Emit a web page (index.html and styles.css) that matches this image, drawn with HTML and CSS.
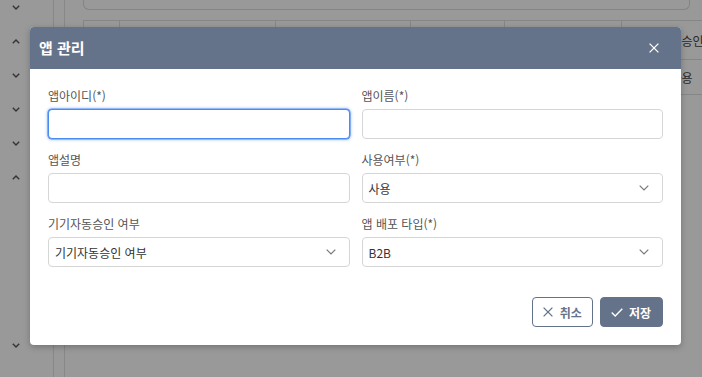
FILE: index.html
```html
<!DOCTYPE html>
<html lang="ko">
<head>
<meta charset="utf-8">
<title>앱 관리</title>
<link rel="stylesheet" href="styles.css">
</head>
<body>
<div class="page">
  <aside class="sidebar">
    <ul class="nav">
      <li class="nav-item"><svg class="chev" viewBox="0 0 8 5"><polyline points="0.8,0.8 4,4 7.2,0.8"/></svg></li>
      <li class="nav-item"><svg class="chev" viewBox="0 0 8 5"><polyline points="0.8,4.2 4,1 7.2,4.2"/></svg></li>
      <li class="nav-item"><svg class="chev" viewBox="0 0 8 5"><polyline points="0.8,0.8 4,4 7.2,0.8"/></svg></li>
      <li class="nav-item"><svg class="chev" viewBox="0 0 8 5"><polyline points="0.8,0.8 4,4 7.2,0.8"/></svg></li>
      <li class="nav-item"><svg class="chev" viewBox="0 0 8 5"><polyline points="0.8,0.8 4,4 7.2,0.8"/></svg></li>
      <li class="nav-item"><svg class="chev" viewBox="0 0 8 5"><polyline points="0.8,4.2 4,1 7.2,4.2"/></svg></li>
      <li class="nav-sub"></li>
      <li class="nav-item"><svg class="chev" viewBox="0 0 8 5"><polyline points="0.8,0.8 4,4 7.2,0.8"/></svg></li>
    </ul>
  </aside>
  <div class="rail"></div>
  <main class="main">
    <div class="filter-box">
      <div class="filter-field"></div>
      <div class="filter-field"></div>
      <div class="filter-field"></div>
    </div>
    <div class="table-wrap">
      <table class="grid">
        <colgroup>
          <col class="c1"><col class="c2"><col class="c3"><col class="c4"><col class="c5"><col class="c6">
        </colgroup>
        <thead>
          <tr><th></th><th>앱아이디</th><th>앱이름</th><th>앱설명</th><th>사용여부</th><th>자동승인</th></tr>
        </thead>
        <tbody>
          <tr><td></td><td></td><td></td><td></td><td></td><td>사용</td></tr>
        </tbody>
      </table>
    </div>
  </main>
</div>

<div class="overlay"></div>

<div class="modal">
  <div class="modal-header">
    <h2 class="modal-title">앱 관리</h2>
    <button class="modal-close" type="button">
      <svg viewBox="0 0 10 10" width="10" height="10"><path d="M0.6 0.6 L9.4 9.4 M9.4 0.6 L0.6 9.4"/></svg>
    </button>
  </div>
  <div class="modal-body">
    <div class="form-grid">
      <div class="field">
        <label class="label">앱아이디(*)</label>
        <input class="input is-focused" type="text">
      </div>
      <div class="field">
        <label class="label">앱이름(*)</label>
        <input class="input" type="text">
      </div>
      <div class="field">
        <label class="label">앱설명</label>
        <input class="input" type="text">
      </div>
      <div class="field">
        <label class="label">사용여부(*)</label>
        <div class="select"><span>사용</span><svg class="select-arrow" viewBox="0 0 10 6"><polyline points="0.7,0.7 5,5 9.3,0.7"/></svg></div>
      </div>
      <div class="field">
        <label class="label">기기자동승인 여부</label>
        <div class="select"><span>기기자동승인 여부</span><svg class="select-arrow" viewBox="0 0 10 6"><polyline points="0.7,0.7 5,5 9.3,0.7"/></svg></div>
      </div>
      <div class="field">
        <label class="label">앱 배포 타입(*)</label>
        <div class="select"><span>B2B</span><svg class="select-arrow" viewBox="0 0 10 6"><polyline points="0.7,0.7 5,5 9.3,0.7"/></svg></div>
      </div>
    </div>
    <div class="modal-footer">
      <button class="btn btn-outline" type="button">
        <svg class="btn-icon" viewBox="0 0 10 10" width="10" height="10"><path d="M0.6 0.6 L9.4 9.4 M9.4 0.6 L0.6 9.4"/></svg>
        <span>취소</span>
      </button>
      <button class="btn btn-primary" type="button">
        <svg class="btn-icon check" viewBox="0 0 12 9" width="12" height="9"><polyline points="0.7,4.6 4.2,8 11.3,0.8"/></svg>
        <span>저장</span>
      </button>
    </div>
  </div>
</div>
</body>
</html>
```

FILE: styles.css
```css
* { box-sizing: border-box; margin: 0; padding: 0; }

html, body {
  width: 702px;
  height: 377px;
  overflow: hidden;
}

body {
  position: relative;
  background: #fff;
  color: #333;
  font-family: "Noto Sans CJK KR", "Noto Sans", sans-serif;
  font-size: 12px;
}

/* ---------- background page ---------- */
.page {
  display: flex;
  height: 377px;
}

.sidebar {
  width: 54px;
  flex: none;
  border-right: 1px solid #e3e3e3;
}

.nav {
  list-style: none;
  margin-top: -10px;
}

.nav-item {
  height: 34px;
  display: flex;
  align-items: center;
  padding-left: 12px;
}

.nav-sub { height: 134px; }

.chev {
  width: 8px;
  height: 5px;
  fill: none;
  stroke: #555;
  stroke-width: 1.4;
}

.rail {
  width: 11px;
  flex: none;
  border-right: 1px solid #e3e3e3;
}

.main {
  flex: 1;
  padding: 0 12px 0 18px;
  min-width: 0;
}

.filter-box {
  margin-top: -40px;
  height: 50px;
  border: 1px solid #dcdcdc;
  border-top: 0;
  border-radius: 0 0 6px 6px;
  display: flex;
  align-items: flex-end;
  gap: 17px;
  padding: 0 0 9px 14px;
}

.filter-field {
  width: 110px;
  height: 30px;
  border: 1px solid #d8d8d8;
  border-bottom: 2px solid #cfcfcf;
  border-radius: 4px;
}

.table-wrap {
  margin-top: 10px;
  width: 700px;
}

.grid {
  border-collapse: collapse;
  table-layout: fixed;
  width: 658px;
}

.c1 { width: 36px; }
.c2 { width: 156px; }
.c3 { width: 135px; }
.c4 { width: 94px; }
.c5 { width: 117px; }
.c6 { width: 120px; }

.grid th,
.grid td {
  border: 1px solid #e0e0e0;
  font-weight: 400;
  font-size: 12px;
  color: #444;
  text-align: center;
  white-space: nowrap;
}

.grid th { height: 39px; }
.grid td { height: 35px; }

/* ---------- overlay ---------- */
.overlay {
  position: absolute;
  inset: 0;
  background: rgba(0, 0, 0, 0.4);
}

/* ---------- modal ---------- */
.modal {
  position: absolute;
  left: 30px;
  top: 27px;
  width: 651px;
  background: #fff;
  border-radius: 4px;
  overflow: hidden;
  box-shadow: 0 2px 6px rgba(0, 0, 0, 0.25);
}

.modal-header {
  height: 42px;
  background: #64738a;
  display: flex;
  align-items: center;
  justify-content: space-between;
  padding: 0 17px 0 9px;
}

.modal-title {
  color: #fff;
  font-size: 15px;
  font-weight: 700;
  line-height: 20px;
}

.modal-close {
  width: 20px;
  height: 20px;
  border: 0;
  background: none;
  display: flex;
  align-items: center;
  justify-content: center;
}

.modal-close svg {
  fill: none;
  stroke: #fff;
  stroke-width: 1.3;
}

.modal-body {
  padding: 18px;
}

.form-grid {
  display: grid;
  grid-template-columns: 1fr 1fr;
  column-gap: 12px;
  row-gap: 12px;
}

.field {
  display: flex;
  flex-direction: column;
}

.label {
  font-size: 12px;
  line-height: 18px;
  color: #555;
  margin-bottom: 4px;
}

.input,
.select {
  height: 30px;
  width: 100%;
  border: 1px solid #d6d6d6;
  border-radius: 4px;
  background: #fff;
  font-family: inherit;
  font-size: 12px;
  color: #333;
  outline: none;
}

.input.is-focused {
  border-color: #4a8af3;
  box-shadow: 0 0 0 0.6px #4a8af3, 0 0 2px 2px rgba(74, 138, 243, 0.22);
}

.select {
  display: flex;
  align-items: center;
  justify-content: space-between;
  padding: 0 13px 0 6px;
}

.select-arrow {
  width: 10px;
  height: 6px;
  fill: none;
  stroke: #777;
  stroke-width: 1.2;
}

.modal-footer {
  display: flex;
  justify-content: flex-end;
  gap: 7px;
  margin-top: 30px;
}

.btn {
  height: 30px;
  display: inline-flex;
  align-items: center;
  border-radius: 4px;
  font-family: inherit;
  font-size: 12px;
  font-weight: 700;
  border: 1px solid #64738a;
}

.btn-outline {
  background: #fff;
  color: #64738a;
  gap: 7px;
  padding: 0 10px 0 10px;
}

.btn-outline .btn-icon {
  fill: none;
  stroke: #64738a;
  stroke-width: 1.3;
}

.btn-primary {
  background: #64738a;
  color: #fff;
  gap: 6px;
  padding: 0 11px 0 10px;
}

.btn-primary .btn-icon {
  fill: none;
  stroke: #fff;
  stroke-width: 1.4;
}
```
